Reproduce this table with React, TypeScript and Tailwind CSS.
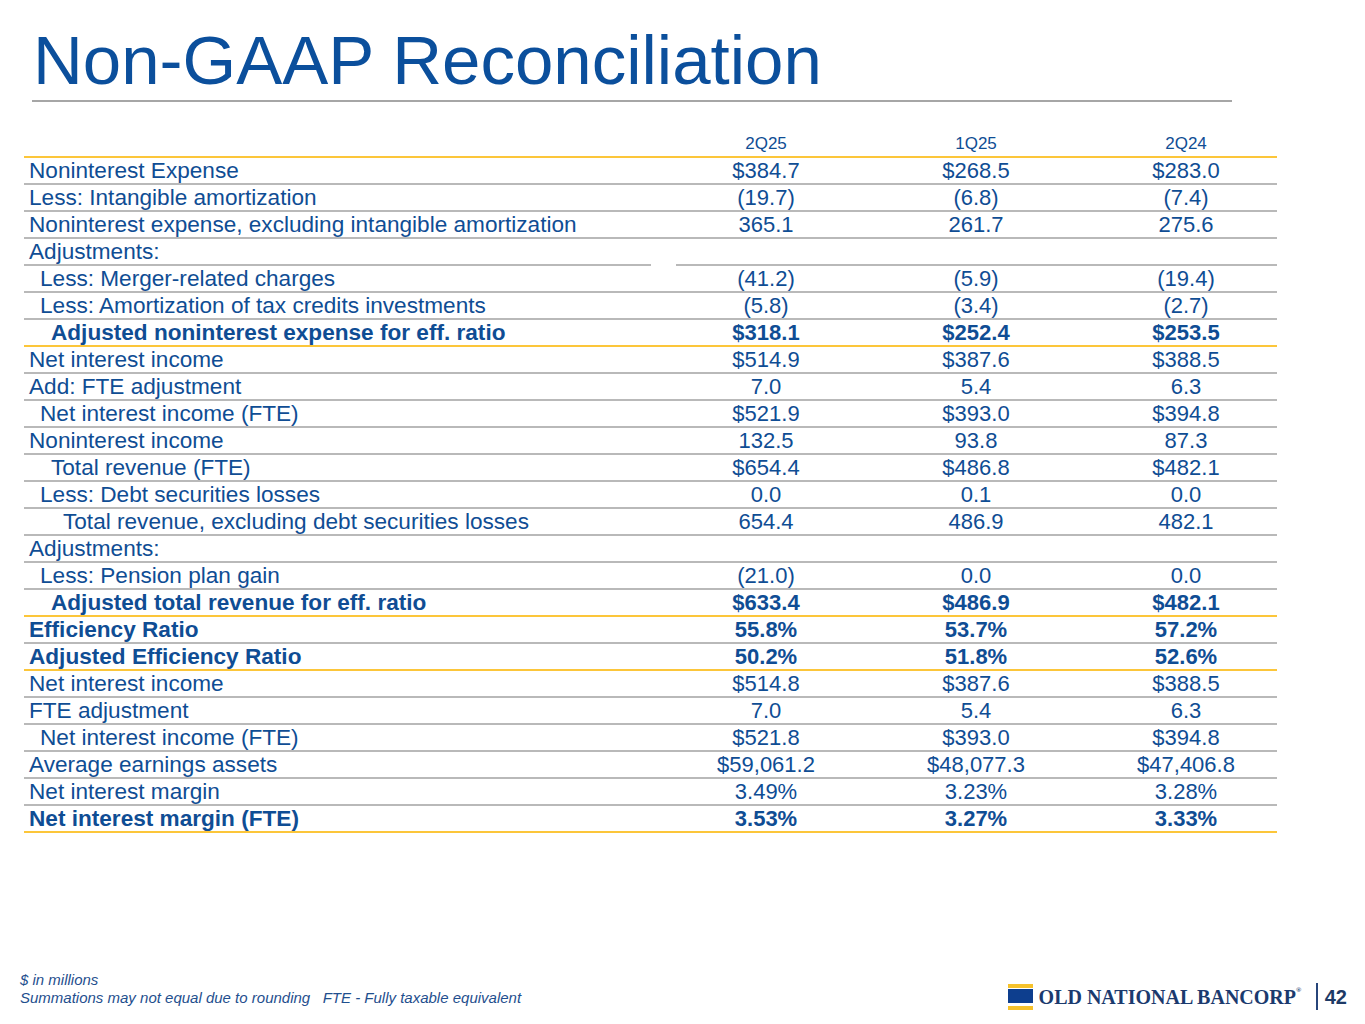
import React from "react";

type Row = {
  label: string;
  values: [string, string, string];
  indent?: number;
  bold?: boolean;
  line?: "gray" | "yellow";
  split?: boolean;
};

const rows: Row[] = [
  { label: "Noninterest Expense", values: ["$384.7", "$268.5", "$283.0"] },
  { label: "Less: Intangible amortization", values: ["(19.7)", "(6.8)", "(7.4)"] },
  { label: "Noninterest expense, excluding intangible amortization", values: ["365.1", "261.7", "275.6"] },
  { label: "Adjustments:", values: ["", "", ""], split: true },
  { label: "Less: Merger-related charges", values: ["(41.2)", "(5.9)", "(19.4)"], indent: 1 },
  { label: "Less: Amortization of tax credits investments", values: ["(5.8)", "(3.4)", "(2.7)"], indent: 1 },
  { label: "Adjusted noninterest expense for eff. ratio", values: ["$318.1", "$252.4", "$253.5"], indent: 2, bold: true, line: "yellow" },
  { label: "Net interest income", values: ["$514.9", "$387.6", "$388.5"] },
  { label: "Add: FTE adjustment", values: ["7.0", "5.4", "6.3"] },
  { label: "Net interest income (FTE)", values: ["$521.9", "$393.0", "$394.8"], indent: 1 },
  { label: "Noninterest income", values: ["132.5", "93.8", "87.3"] },
  { label: "Total revenue (FTE)", values: ["$654.4", "$486.8", "$482.1"], indent: 2 },
  { label: "Less: Debt securities losses", values: ["0.0", "0.1", "0.0"], indent: 1 },
  { label: "Total revenue, excluding debt securities losses", values: ["654.4", "486.9", "482.1"], indent: 3 },
  { label: "Adjustments:", values: ["", "", ""] },
  { label: "Less: Pension plan gain", values: ["(21.0)", "0.0", "0.0"], indent: 1 },
  { label: "Adjusted total revenue for eff. ratio", values: ["$633.4", "$486.9", "$482.1"], indent: 2, bold: true, line: "yellow" },
  { label: "Efficiency Ratio", values: ["55.8%", "53.7%", "57.2%"], bold: true },
  { label: "Adjusted Efficiency Ratio", values: ["50.2%", "51.8%", "52.6%"], bold: true, line: "yellow" },
  { label: "Net interest income", values: ["$514.8", "$387.6", "$388.5"] },
  { label: "FTE adjustment", values: ["7.0", "5.4", "6.3"] },
  { label: "Net interest income (FTE)", values: ["$521.8", "$393.0", "$394.8"], indent: 1 },
  { label: "Average earnings assets", values: ["$59,061.2", "$48,077.3", "$47,406.8"] },
  { label: "Net interest margin", values: ["3.49%", "3.23%", "3.28%"] },
  { label: "Net interest margin (FTE)", values: ["3.53%", "3.27%", "3.33%"], bold: true, line: "yellow" },
];

const indentClass = ["pl-[5px]", "pl-[16px]", "pl-[27px]", "pl-[39px]"];

const TableRow = ({ row }: { row: Row }) => {
  const border = row.line === "yellow" ? "border-[#fcc63a]" : "border-[#b9b9b9]";
  const weight = row.bold ? "font-bold" : "font-normal";
  return (
    <div className={`grid grid-cols-[627px_230px_190px_206px] h-[27px] ${weight}`}>
      <div className={`border-b-2 ${border} ${indentClass[row.indent ?? 0]} text-[22.6px] leading-[25px] whitespace-nowrap`}>
        {row.label}
      </div>
      <div className={`border-b-2 ${border} leading-[25px] text-center ${row.split ? "ml-[25px]" : ""}`}>
        {row.values[0]}
      </div>
      <div className={`border-b-2 ${border} leading-[25px] text-center`}>{row.values[1]}</div>
      <div className={`border-b-2 ${border} leading-[25px] text-center pl-[24px]`}>{row.values[2]}</div>
    </div>
  );
};

const Logo = () => (
  <div className="flex items-center">
    <div className="flex flex-col w-[25px]">
      <div className="h-[4px] bg-[#f6c22b]" />
      <div className="h-[14px] mt-[1px] bg-[#0d3e8e]" />
      <div className="h-[4px] mt-[3px] bg-[#f6c22b]" />
    </div>
    <div className="ml-[6px] font-['Liberation_Serif',serif] font-bold text-[20px] leading-[24px] text-[#1b3a6e] whitespace-nowrap">
      OLD NATIONAL BANCORP<sup className="text-[7px] align-[8px]">®</sup>
    </div>
    <div className="ml-[15px] w-[1.5px] h-[27px] bg-[#27457a]" />
    <div className="ml-[7px] font-bold text-[20px] leading-[24px] text-[#1e3a66]">42</div>
  </div>
);

export default function App() {
  return (
    <div className="w-[1365px] h-[1024px] bg-white flex flex-col font-['Liberation_Sans',Arial,sans-serif] text-[#0f4d94] overflow-hidden">
      <h1 className="mt-[26px] pl-[33px] text-[69px] leading-[69px] text-[#0b4f9c] whitespace-nowrap">
        Non-GAAP Reconciliation
      </h1>
      <div className="mt-[5px] ml-[32px] w-[1200px] h-[2px] bg-[#a6a6a6]" />

      <div className="mt-[29px] ml-[24px] w-[1253px] text-[22px]">
        <div className="grid grid-cols-[627px_230px_190px_206px] h-[27px] border-b-2 border-[#fcc63a] text-[17px] leading-[25px]">
          <div />
          <div className="text-center">2Q25</div>
          <div className="text-center">1Q25</div>
          <div className="text-center pl-[24px]">2Q24</div>
        </div>
        {rows.map((row, i) => (
          <TableRow key={i} row={row} />
        ))}
      </div>

      <div className="mt-auto flex items-end justify-between pl-[20px] pr-[18px] pb-[14px]">
        <div className="italic text-[15px] leading-[18px] text-[#1f4f8e] pb-[3px]">
          <div>$ in millions</div>
          <div className="whitespace-pre">Summations may not equal due to rounding   FTE - Fully taxable equivalent</div>
        </div>
        <Logo />
      </div>
    </div>
  );
}
